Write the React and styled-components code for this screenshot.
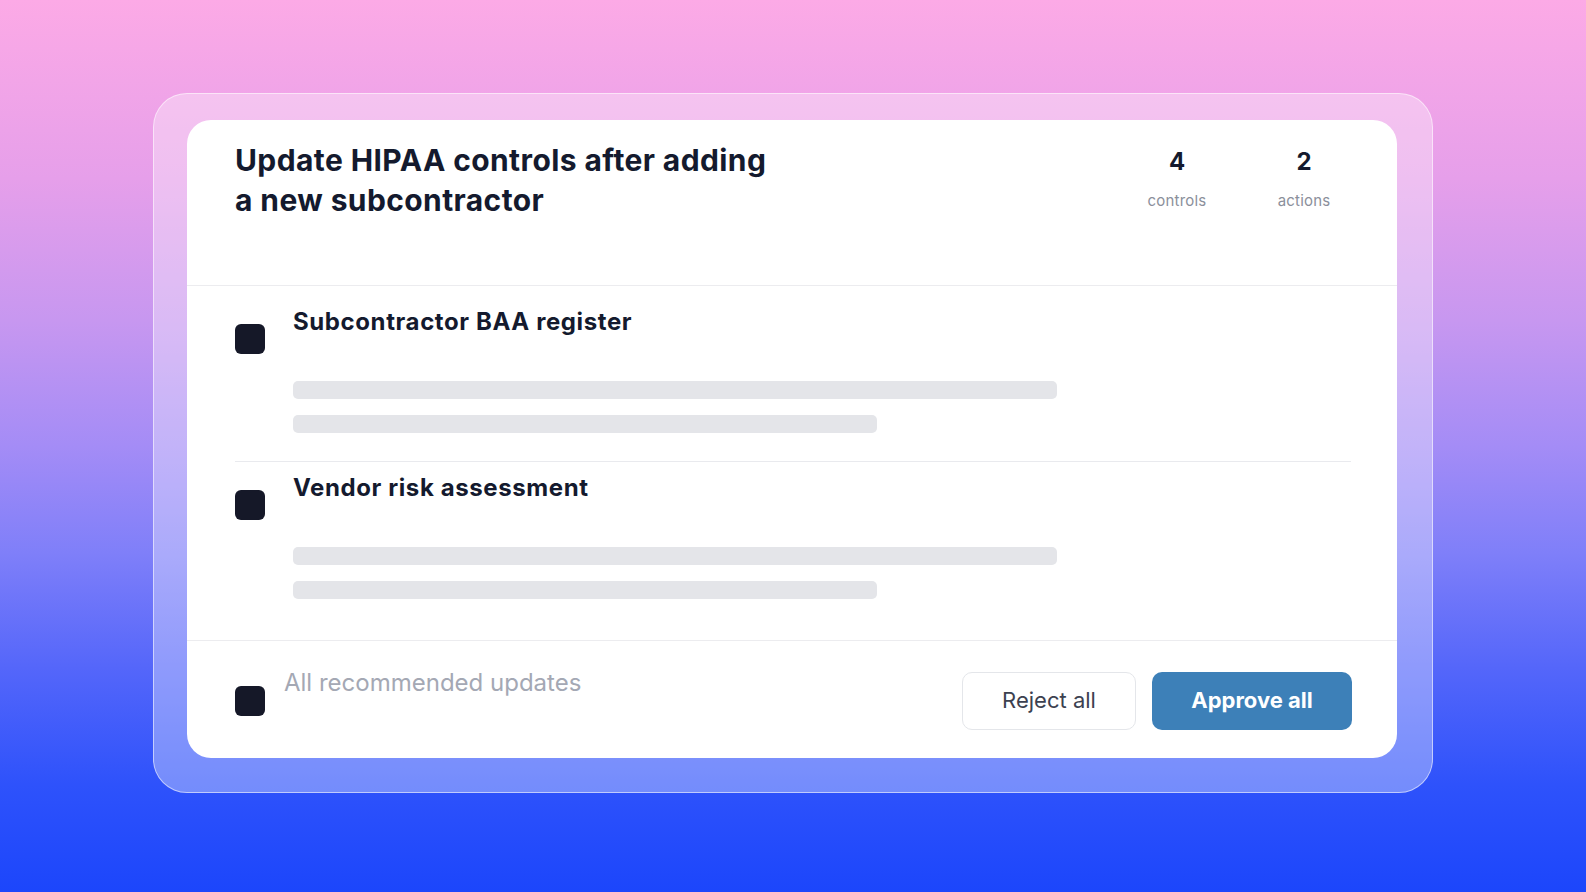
import React from 'react'
import styled, { createGlobalStyle } from 'styled-components'

const GlobalStyle = createGlobalStyle`
  html, body {
    margin: 0;
    padding: 0;
  }
  body {
    width: 1586px;
    height: 892px;
    overflow: hidden;
    font-family: Inter, "Noto Sans", "Liberation Sans", sans-serif;
    background: linear-gradient(180deg, #fcaae6 0%, #e69fea 20%, #c797f0 36%, #a48cf6 50%, #7f7ff9 62%, #5466fa 75%, #2e52fb 88%, #1c46fb 100%);
  }
`

const Page = styled.div`
  padding-top: 93px;
`

const Frame = styled.div`
  box-sizing: border-box;
  width: 1280px;
  height: 700px;
  margin: 0 auto;
  padding: 26px 34px 34px 33px;
  border-radius: 34px;
  background: rgba(255, 255, 255, 0.34);
  border: 1.5px solid rgba(255, 255, 255, 0.55);
`

const Card = styled.div`
  width: 1210px;
  height: 638px;
  background: #ffffff;
  border-radius: 24px;
  overflow: hidden;
  display: flex;
  flex-direction: column;
  color: #141a2e;
`

const Header = styled.div`
  box-sizing: border-box;
  height: 166px;
  padding: 21px 53px 0 48px;
  display: flex;
  justify-content: space-between;
  align-items: flex-start;
  border-bottom: 1px solid #ececef;
`

const Title = styled.h1`
  margin: -1px 0 0;
  width: 535px;
  font-size: 30px;
  line-height: 40px;
  font-weight: 700;
  letter-spacing: 0.4px;
`

const Stats = styled.div`
  display: flex;
  gap: 47px;
  margin-top: 6px;
`

const Stat = styled.div`
  width: 80px;
  display: flex;
  flex-direction: column;
  align-items: center;
  gap: 14px;
`

const StatValue = styled.div`
  font-size: 24px;
  line-height: 30px;
  font-weight: 700;
`

const StatLabel = styled.div`
  font-size: 15px;
  line-height: 20px;
  color: #8b8f9b;
  letter-spacing: 0.2px;
`

const List = styled.div`
  box-sizing: border-box;
  height: 354px;
  padding: 10px 46px 10px 48px;
`

const Row = styled.div`
  display: flex;
  gap: 28px;
  padding: 11px 0 28px;
  border-bottom: ${p => (p.$divider ? '1px solid #e9eaee' : 'none')};
`

const Check = styled.div`
  flex: none;
  width: 30px;
  height: 30px;
  border-radius: 6px;
  background: #151828;
  margin-top: ${p => p.$offset || 0}px;
`

const RowBody = styled.div`
  flex: 1;
  display: flex;
  flex-direction: column;
`

const RowTitle = styled.div`
  font-size: 24px;
  line-height: 30px;
  font-weight: 700;
  letter-spacing: 0.6px;
  margin-bottom: 44px;
`

const Bars = styled.div`
  display: flex;
  flex-direction: column;
  gap: 16px;
`

const Bar = styled.div`
  height: 18px;
  border-radius: 5px;
  background: #e4e5e9;
  width: ${p => p.$width}px;
`

const Footer = styled.div`
  box-sizing: border-box;
  height: 118px;
  padding: 24px 45px 0 48px;
  border-top: 1px solid #ececef;
  display: flex;
  justify-content: space-between;
  align-items: flex-start;
`

const SelectAll = styled.div`
  display: flex;
  gap: 19px;
`

const SelectLabel = styled.div`
  font-size: 24px;
  line-height: 30px;
  padding-top: 3px;
  color: #a4a8b4;
`

const Actions = styled.div`
  display: flex;
  gap: 16px;
  margin-top: 7px;
`

const Button = styled.button`
  box-sizing: border-box;
  height: 58px;
  width: ${p => p.$width}px;
  border-radius: 10px;
  font-family: inherit;
  font-size: 22px;
  cursor: pointer;
  padding: 0 0 2px;
  border: ${p => (p.$primary ? 'none' : '1.5px solid #e4e6ea')};
  background: ${p => (p.$primary ? '#3d80b8' : '#ffffff')};
  color: ${p => (p.$primary ? '#ffffff' : '#3c4150')};
  font-weight: ${p => (p.$primary ? 700 : 400)};
`

const controls = [
  { title: 'Subcontractor BAA register' },
  { title: 'Vendor risk assessment' },
]

export default function App() {
  return (
    <>
      <GlobalStyle />
      <Page>
        <Frame>
          <Card>
            <Header>
              <Title>Update HIPAA controls after adding a new subcontractor</Title>
              <Stats>
                <Stat>
                  <StatValue>4</StatValue>
                  <StatLabel>controls</StatLabel>
                </Stat>
                <Stat>
                  <StatValue>2</StatValue>
                  <StatLabel>actions</StatLabel>
                </Stat>
              </Stats>
            </Header>
            <List>
              {controls.map((c, i) => (
                <Row key={c.title} $divider={i < controls.length - 1}>
                  <Check $offset={17} />
                  <RowBody>
                    <RowTitle>{c.title}</RowTitle>
                    <Bars>
                      <Bar $width={764} />
                      <Bar $width={584} />
                    </Bars>
                  </RowBody>
                </Row>
              ))}
            </List>
            <Footer>
              <SelectAll>
                <Check $offset={21} />
                <SelectLabel>All recommended updates</SelectLabel>
              </SelectAll>
              <Actions>
                <Button $width={174}>Reject all</Button>
                <Button $width={200} $primary>Approve all</Button>
              </Actions>
            </Footer>
          </Card>
        </Frame>
      </Page>
    </>
  )
}
